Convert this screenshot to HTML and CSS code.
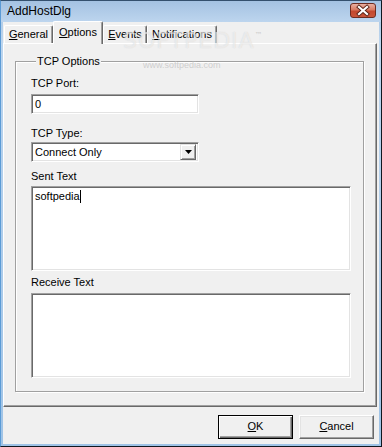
FILE: index.html
```html
<!DOCTYPE html>
<html>
<head>
<meta charset="utf-8">
<link rel="stylesheet" href="styles.css">
</head>
<body>
<div class="window">
  <div class="titlebar">
    <span class="title">AddHostDlg</span>
    <span class="close">
      <svg width="26" height="15" viewBox="0 0 26 15">
        <path d="M9 4 L17 11 M17 4 L9 11" stroke="#5a2418" stroke-width="4" stroke-linecap="square" fill="none"/>
        <path d="M9 4 L17 11 M17 4 L9 11" stroke="#ffffff" stroke-width="2.2" stroke-linecap="square" fill="none"/>
      </svg>
    </span>
  </div>
  <div class="client">
    <div class="tabs">
      <div class="tab w-general"><u>G</u>eneral</div>
      <div class="tab sel w-options"><u>O</u>ptions</div>
      <div class="tab w-events"><u>E</u>vents</div>
      <div class="tab w-notif"><u>N</u>otifications</div>
    </div>
    <div class="page">
      <fieldset class="group">
        <legend>TCP Options</legend>
        <div class="label l1">TCP Port:</div>
        <div class="edit"><span class="val">0</span></div>
        <div class="label l2">TCP Type:</div>
        <div class="combo">
          <span class="val">Connect Only</span>
          <span class="drop"><svg width="7" height="4" viewBox="0 0 7 4"><path d="M0 0H7L3.5 4Z" fill="#000"/></svg></span>
        </div>
        <div class="label l3">Sent Text</div>
        <div class="memo"><span class="val">softpedia</span><span class="caret"></span></div>
        <div class="label l4">Receive Text</div>
        <div class="memo"></div>
      </fieldset>
    </div>
    <div class="footer">
      <div class="btn default"><u>O</u>K</div>
      <div class="btn"><u>C</u>ancel</div>
    </div>
  </div>
  <div class="wm-big">SOFTPEDIA<span class="tm">™</span></div>
  <div class="wm-small">www.softpedia.com</div>
</div>
</body>
</html>
```
FILE: styles.css
```css
html, body {
  margin: 0;
  padding: 0;
  background: #ffffff;
}
body {
  font-family: "Liberation Sans", Arial, sans-serif;
  font-size: 11px;
  line-height: 13px;
  color: #000;
}
.window {
  position: relative;
  width: 382px;
  height: 447px;
  box-sizing: border-box;
  border-top: 1px solid #34506e;
  border-left: 1px solid #5b9bd6;
  border-right: 1px solid #101820;
  border-bottom: 1px solid #101820;
  padding: 0 2px 2px 2px;
  background: linear-gradient(#a6c4e3, #bcd5ee 40px, #9fc3e6);
  display: flex;
  flex-direction: column;
  overflow: hidden;
}
.titlebar {
  height: 21px;
  display: flex;
  align-items: center;
  justify-content: space-between;
  padding-left: 4px;
  padding-right: 3px;
  background: linear-gradient(#a4c2e2, #bdd5ee);
  margin: 0 -2px;
  padding-left: 6px;
  padding-right: 5px;
}
.title {
  font-size: 12px;
  color: #000;
  margin-top: -1px;
}
.close {
  width: 26px;
  height: 15px;
  box-sizing: border-box;
  border: 1px solid #6e2c20;
  border-radius: 3px;
  background: linear-gradient(#e9b0a2, #d87a62 45%, #c4482e 55%, #c9553a);
  display: flex;
  align-items: center;
  justify-content: center;
  margin-top: -2px;
}
.close svg { display: block; margin: -1px; }
.client {
  flex: 1;
  background: #f0f0f0;
  display: flex;
  flex-direction: column;
}
.tabs {
  height: 21px;
  display: flex;
  align-items: flex-end;
  padding-left: 1px;
}
.tab {
  height: 18px;
  box-sizing: border-box;
  border-top: 1px solid #ffffff;
  border-left: 1px solid #ffffff;
  border-right: 1px solid #696969;
  box-shadow: inset -1px 0 0 #a0a0a0;
  border-radius: 2px 2px 0 0;
  padding-top: 2px;
  text-align: center;
  white-space: nowrap;
}
.tab.sel {
  height: 23px;
  margin-bottom: -1px;
  padding-top: 4px;
  position: relative;
  z-index: 1;
  background: #f0f0f0;
}
.w-general { width: 49px; }
.w-options { width: 50px; }
.w-events { width: 44px; }
.w-notif { width: 70px; }
.page {
  height: 364px;
  box-sizing: border-box;
  margin-right: 2px;
  border-top: 1px solid #ffffff;
  border-left: 1px solid #ffffff;
  border-right: 1px solid #696969;
  border-bottom: 1px solid #696969;
  box-shadow: inset -1px -1px 0 #a0a0a0;
  padding-top: 11px;
  padding-left: 11px;
}
.group {
  width: 349px;
  box-sizing: border-box;
  margin: 0;
  padding: 0 0 13px 15px;
  border: 1px solid #a0a0a0;
  box-shadow: inset 1px 1px 0 #ffffff, 1px 1px 0 #ffffff;
  min-width: 0;
}
.group legend {
  padding: 0 1px;
  margin-left: 5px;
  line-height: 13px;
  background: #f0f0f0;
}
.label { height: 13px; }
.l1 { margin-top: 9px; margin-bottom: 4px; }
.l2 { margin-top: 13px; margin-bottom: 2px; }
.l3 { margin-top: 8px; margin-bottom: 3px; }
.l4 { margin-top: 5px; margin-bottom: 4px; }
.edit, .combo, .memo {
  box-sizing: border-box;
  background: #ffffff;
  border-top: 1px solid #a0a0a0;
  border-left: 1px solid #a0a0a0;
  border-right: 1px solid #ffffff;
  border-bottom: 1px solid #ffffff;
  box-shadow: inset 1px 1px 0 #696969, inset -1px -1px 0 #e3e3e3;
}
.edit {
  width: 168px;
  height: 20px;
  padding: 3px 0 0 3px;
}
.combo {
  width: 168px;
  height: 20px;
  padding: 2px 2px 2px 3px;
  display: flex;
  align-items: center;
  justify-content: space-between;
}
.combo .val { margin-top: 0; }
.drop {
  width: 16px;
  height: 16px;
  box-sizing: border-box;
  background: #f0f0f0;
  border-top: 1px solid #e3e3e3;
  border-left: 1px solid #e3e3e3;
  border-right: 1px solid #696969;
  border-bottom: 1px solid #696969;
  box-shadow: inset 1px 1px 0 #ffffff, inset -1px -1px 0 #a0a0a0;
  display: flex;
  align-items: center;
  justify-content: center;
  margin-right: 0;
}
.drop svg { display: block; }
.memo {
  width: 320px;
  height: 85px;
  padding: 3px 0 0 3px;
}
.caret {
  display: inline-block;
  width: 1px;
  height: 13px;
  background: #000;
  vertical-align: -3px;
}
.footer {
  flex: 1;
  display: flex;
  justify-content: flex-end;
  align-items: flex-start;
  gap: 6px;
  padding-top: 8px;
  padding-right: 5px;
}
.btn {
  width: 75px;
  height: 24px;
  box-sizing: border-box;
  border-top: 1px solid #ffffff;
  border-left: 1px solid #ffffff;
  border-right: 1px solid #696969;
  border-bottom: 1px solid #696969;
  box-shadow: inset -1px -1px 0 #a0a0a0, inset 1px 1px 0 #e3e3e3;
  background: #f0f0f0;
  text-align: center;
  line-height: 21px;
}
.btn.default {
  border: 1px solid #000000;
  box-shadow: inset 1px 1px 0 #ffffff, inset -1px -1px 0 #696969, inset -2px -2px 0 #a0a0a0;
}
.wm-big {
  position: absolute;
  left: 122px;
  top: 23px;
  font-family: "DejaVu Sans", sans-serif;
  font-size: 22px;
  line-height: 24px;
  letter-spacing: 1px;
  color: rgba(255, 255, 255, 0.55);
  text-shadow: 0 0 1px rgba(150, 150, 150, 0.35);
  pointer-events: none;
}
.wm-big .tm {
  font-size: 8px;
  vertical-align: 10px;
  color: rgba(180, 180, 180, 0.6);
  text-shadow: none;
}
.wm-small {
  position: absolute;
  left: 142px;
  top: 59px;
  font-size: 9px;
  line-height: 10px;
  color: rgba(190, 190, 190, 0.7);
  pointer-events: none;
}
```
